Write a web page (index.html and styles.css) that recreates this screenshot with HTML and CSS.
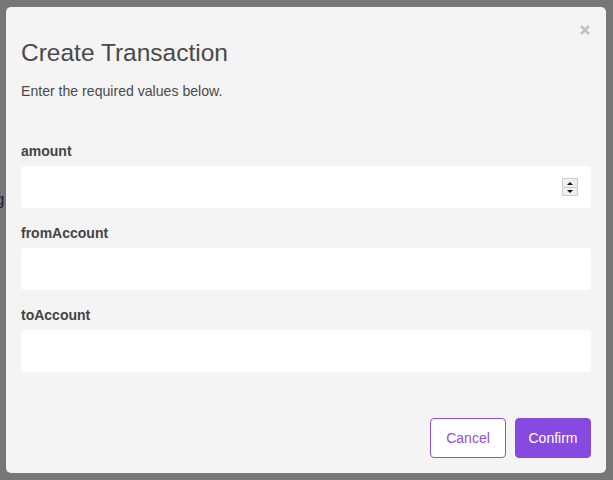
FILE: index.html
```html
<!DOCTYPE html>
<html>
<head>
<meta charset="utf-8">
<link rel="stylesheet" href="styles.css">
</head>
<body>
<div class="page-behind">g</div>
<div class="backdrop">
  <div class="modal">
    <button class="close" aria-label="Close">
      <svg width="10" height="10" viewBox="0 0 10 10"><path d="M1 1 L9 9 M9 1 L1 9" stroke="#c2c2c2" stroke-width="2.6" stroke-linecap="butt"/></svg>
    </button>
    <h2 class="title">Create Transaction</h2>
    <p class="subtitle">Enter the required values below.</p>
    <form class="form">
      <div class="field">
        <label class="label">amount</label>
        <div class="input-wrap">
          <input class="input" type="text">
          <span class="spinner"><span class="spin up"></span><span class="spin down"></span></span>
        </div>
      </div>
      <div class="field">
        <label class="label">fromAccount</label>
        <input class="input" type="text">
      </div>
      <div class="field">
        <label class="label">toAccount</label>
        <input class="input" type="text">
      </div>
    </form>
    <div class="footer">
      <button class="btn btn-cancel" type="button">Cancel</button>
      <button class="btn btn-confirm" type="button">Confirm</button>
    </div>
  </div>
</div>
</body>
</html>
```
FILE: styles.css
```css
html, body {
  margin: 0;
  padding: 0;
  height: 100%;
}
body {
  background: #777777;
  font-family: "Liberation Sans", Arial, sans-serif;
  position: relative;
  overflow: hidden;
}
.page-behind {
  position: absolute;
  left: -5px;
  top: 190px;
  font-size: 17px;
  color: #22243a;
}
.backdrop {
  position: relative;
  padding: 7px 7px 7px 6px;
}
.modal {
  position: relative;
  box-sizing: border-box;
  width: 600px;
  height: 466px;
  background: #f4f4f4;
  border-radius: 5px;
  padding: 32px 15px 15px;
  display: flex;
  flex-direction: column;
}
.close {
  position: absolute;
  top: 18px;
  right: 16px;
  border: 0;
  background: transparent;
  padding: 0;
  width: 10px;
  height: 10px;
  display: block;
}
.close svg { display: block; }
.title {
  margin: 0;
  font-size: 24.5px;
  line-height: 28px;
  font-weight: normal;
  color: #4a4a4a;
}
.subtitle {
  margin: 14px 0 0;
  font-size: 14.1px;
  line-height: 20px;
  color: #4a4a4a;
}
.form {
  margin-top: 40px;
  display: flex;
  flex-direction: column;
  gap: 15px;
}
.field {
  display: flex;
  flex-direction: column;
  gap: 5px;
}
.label {
  font-size: 14px;
  line-height: 20px;
  font-weight: bold;
  color: #444444;
}
.input-wrap {
  position: relative;
}
.input {
  display: block;
  box-sizing: border-box;
  width: 100%;
  height: 42px;
  border: 0;
  border-radius: 4px;
  background: #ffffff;
  padding: 0 12px;
  font-family: inherit;
  font-size: 14px;
  outline: none;
}
.spinner {
  position: absolute;
  left: 541px;
  top: 12px;
  width: 16px;
  height: 18px;
  box-sizing: border-box;
  border: 1px solid #cdcdcd;
  background: #efefef;
  display: flex;
  flex-direction: column;
}
.spin {
  flex: 1;
  position: relative;
}
.spin.up {
  border-bottom: 1px solid #cdcdcd;
}
.spin::after {
  content: "";
  position: absolute;
  left: 4px;
  width: 0;
  height: 0;
  border-left: 3px solid transparent;
  border-right: 3px solid transparent;
}
.spin.up::after {
  top: 3px;
  border-bottom: 3px solid #111111;
}
.spin.down::after {
  top: 2px;
  border-top: 3px solid #111111;
}
.footer {
  margin-top: auto;
  display: flex;
  justify-content: flex-end;
  gap: 9px;
}
.btn {
  box-sizing: border-box;
  width: 76px;
  height: 40px;
  border-radius: 4px;
  font-family: inherit;
  font-size: 14px;
  padding: 0;
  cursor: pointer;
}
.btn-cancel {
  background: #ffffff;
  border: 1px solid #8a4fe3;
  color: #8a4fe3;
}
.btn-confirm {
  background: #874ae0;
  border: 1px solid #874ae0;
  color: #ffffff;
}
```
